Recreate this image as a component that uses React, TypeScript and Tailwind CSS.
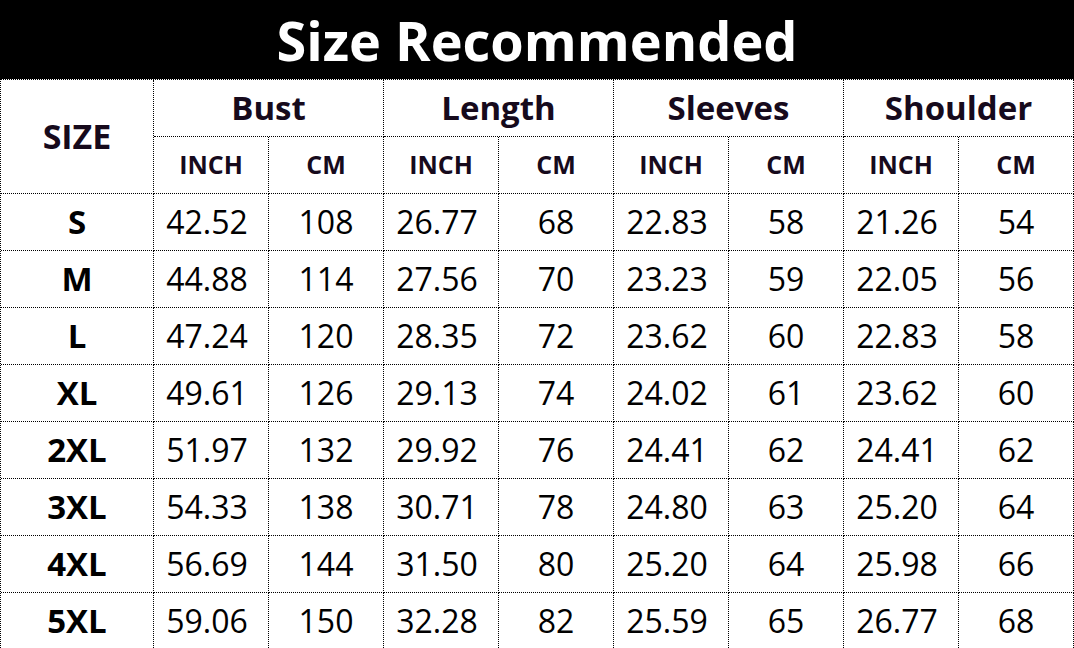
import React from "react";

const rows: [string, string[]][] = [
  ["S", ["42.52", "108", "26.77", "68", "22.83", "58", "21.26", "54"]],
  ["M", ["44.88", "114", "27.56", "70", "23.23", "59", "22.05", "56"]],
  ["L", ["47.24", "120", "28.35", "72", "23.62", "60", "22.83", "58"]],
  ["XL", ["49.61", "126", "29.13", "74", "24.02", "61", "23.62", "60"]],
  ["2XL", ["51.97", "132", "29.92", "76", "24.41", "62", "24.41", "62"]],
  ["3XL", ["54.33", "138", "30.71", "78", "24.80", "63", "25.20", "64"]],
  ["4XL", ["56.69", "144", "31.50", "80", "25.20", "64", "25.98", "66"]],
  ["5XL", ["59.06", "150", "32.28", "82", "25.59", "65", "26.77", "68"]],
];

const groups = ["Bust", "Length", "Sleeves", "Shoulder"];

const cell =
  "flex items-center justify-center border-r border-b border-dotted border-black";

export default function App() {
  return (
    <div
      className="w-[1074px] h-[648px] overflow-hidden bg-white"
      style={{ fontFamily: '"Open Sans", "Noto Sans", sans-serif' }}
    >
      <div className="h-[79px] bg-black flex items-center justify-center">
        <span className="text-white font-bold text-[54px] leading-none">
          Size Recommended
        </span>
      </div>
      <div className="grid grid-cols-[153px_repeat(8,115px)] auto-rows-[57px] border-l border-t border-dotted border-black">
        <div
          className={`${cell} row-span-2 text-[34px] font-bold text-[#160a1c]`}
        >
          SIZE
        </div>
        {groups.map((g) => (
          <div
            key={g}
            className={`${cell} col-span-2 text-[33px] font-bold text-[#160a1c]`}
          >
            {g}
          </div>
        ))}
        {groups.map((g) => (
          <React.Fragment key={g + "sub"}>
            <div className={`${cell} text-[25px] font-bold text-[#160a1c]`}>
              INCH
            </div>
            <div className={`${cell} text-[25px] font-bold text-[#160a1c]`}>
              CM
            </div>
          </React.Fragment>
        ))}
        {rows.map(([size, vals]) => (
          <React.Fragment key={size}>
            <div className={`${cell} text-[33px] font-bold text-black`}>
              {size}
            </div>
            {vals.map((v, i) => (
              <div
                key={i}
                className={`${cell} text-[32px] text-black ${
                  i % 2 === 0 ? "pr-2" : ""
                }`}
              >
                {v}
              </div>
            ))}
          </React.Fragment>
        ))}
      </div>
    </div>
  );
}
